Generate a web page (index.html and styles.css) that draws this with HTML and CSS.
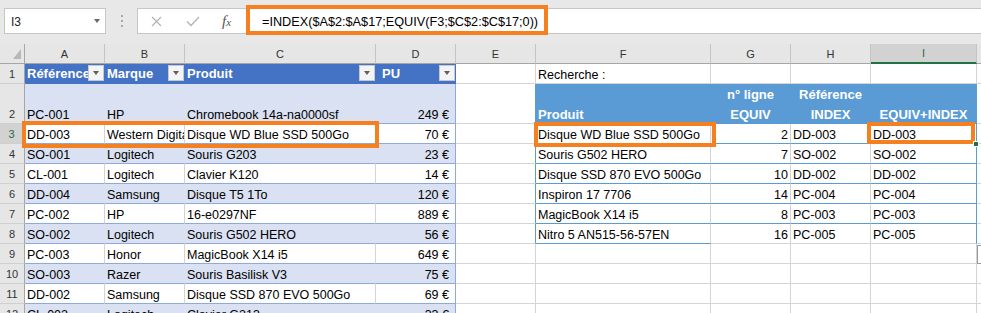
FILE: index.html
```html
<!DOCTYPE html>
<html lang="fr">
<head>
<meta charset="utf-8">
<title>Excel - INDEX EQUIV</title>
<link rel="stylesheet" href="styles.css">
</head>
<body>
<div class="app">
  <div class="toolbar">
    <div class="namebox"><span class="nb-text">I3</span><span class="nb-arrow"></span></div>
    <div class="grip"><i></i><i></i><i></i></div>
    <div class="fbar">
      <div class="fbtns">
        <svg class="ic-x" width="11" height="11" viewBox="0 0 11 11"><path d="M1 1 L10 10 M10 1 L1 10" stroke="#b3b3b3" stroke-width="1.2" fill="none"/></svg>
        <svg class="ic-ok" width="14" height="11" viewBox="0 0 14 11"><path d="M1 5.5 L5 9.5 L13 1" stroke="#b3b3b3" stroke-width="1.3" fill="none"/></svg>
        <span class="fx">f<span>x</span></span>
      </div>
      <div class="ftext">=INDEX($A$2:$A$17;EQUIV(F3;$C$2:$C$17;0))</div>
    </div>
    <div class="mark mark-formula"></div>
  </div>

  <div class="sheet">
    <!-- column headers -->
    <div class="ch corner"><svg width="8" height="10" viewBox="0 0 8 10"><polygon points="8,0 8,10 0,10" fill="#b7b7b7"/></svg></div>
    <div class="ch">A</div>
    <div class="ch">B</div>
    <div class="ch">C</div>
    <div class="ch">D</div>
    <div class="ch">E</div>
    <div class="ch">F</div>
    <div class="ch">G</div>
    <div class="ch">H</div>
    <div class="ch sel">I</div>
    <div class="ch j"></div>

    <!-- row 1 -->
    <div class="rh">1</div>
    <div class="c thd"><span class="t">Référence</span><span class="flt"></span></div>
    <div class="c thd"><span class="t">Marque</span><span class="flt"></span></div>
    <div class="c thd"><span class="t">Produit</span><span class="flt"></span></div>
    <div class="c thd pu"><span class="t">PU</span><span class="flt"></span></div>
    <div class="c"></div>
    <div class="c">Recherche :</div>
    <div class="c"></div>
    <div class="c"></div>
    <div class="c"></div>
    <div class="c j"></div>

    <!-- row 2 -->
    <div class="rh">2</div>
    <div class="c band">PC-001</div>
    <div class="c band">HP</div>
    <div class="c band">Chromebook 14a-na0000sf</div>
    <div class="c band r eur tend">249 €</div>
    <div class="c tl"></div>
    <div class="c rhd">Produit</div>
    <div class="c rhd ctr"><div class="two"><span>n° ligne</span><span>EQUIV</span></div></div>
    <div class="c rhd ctr"><div class="two"><span>Référence</span><span>INDEX</span></div></div>
    <div class="c rhd ctr tr">EQUIV+INDEX</div>
    <div class="c j"></div>

    <!-- row 3 -->
    <div class="rh sel">3</div>
    <div class="c trow">DD-003</div>
    <div class="c trow">Western Digital</div>
    <div class="c trow">Disque WD Blue SSD 500Go</div>
    <div class="c trow r eur tend">70 €</div>
    <div class="c tl"></div>
    <div class="c rb">Disque WD Blue SSD 500Go</div>
    <div class="c rb r">2</div>
    <div class="c rb">DD-003</div>
    <div class="c rb tr">DD-003</div>
    <div class="c j"></div>

    <!-- row 4 -->
    <div class="rh">4</div>
    <div class="c band">SO-001</div>
    <div class="c band">Logitech</div>
    <div class="c band">Souris G203</div>
    <div class="c band r eur tend">23 €</div>
    <div class="c tl"></div>
    <div class="c rb">Souris G502 HERO</div>
    <div class="c rb r">7</div>
    <div class="c rb">SO-002</div>
    <div class="c rb tr">SO-002</div>
    <div class="c j"></div>

    <!-- row 5 -->
    <div class="rh">5</div>
    <div class="c trow">CL-001</div>
    <div class="c trow">Logitech</div>
    <div class="c trow">Clavier K120</div>
    <div class="c trow r eur tend">14 €</div>
    <div class="c tl"></div>
    <div class="c rb">Disque SSD 870 EVO 500Go</div>
    <div class="c rb r">10</div>
    <div class="c rb">DD-002</div>
    <div class="c rb tr">DD-002</div>
    <div class="c j"></div>

    <!-- row 6 -->
    <div class="rh">6</div>
    <div class="c band">DD-004</div>
    <div class="c band">Samsung</div>
    <div class="c band">Disque T5 1To</div>
    <div class="c band r eur tend">120 €</div>
    <div class="c tl"></div>
    <div class="c rb">Inspiron 17 7706</div>
    <div class="c rb r">14</div>
    <div class="c rb">PC-004</div>
    <div class="c rb tr">PC-004</div>
    <div class="c j"></div>

    <!-- row 7 -->
    <div class="rh">7</div>
    <div class="c trow">PC-002</div>
    <div class="c trow">HP</div>
    <div class="c trow">16-e0297NF</div>
    <div class="c trow r eur tend">889 €</div>
    <div class="c tl"></div>
    <div class="c rb">MagicBook X14 i5</div>
    <div class="c rb r">8</div>
    <div class="c rb">PC-003</div>
    <div class="c rb tr">PC-003</div>
    <div class="c j"></div>

    <!-- row 8 -->
    <div class="rh">8</div>
    <div class="c band">SO-002</div>
    <div class="c band">Logitech</div>
    <div class="c band">Souris G502 HERO</div>
    <div class="c band r eur tend">56 €</div>
    <div class="c tl"></div>
    <div class="c rb">Nitro 5 AN515-56-57EN</div>
    <div class="c r">16</div>
    <div class="c">PC-005</div>
    <div class="c tr">PC-005</div>
    <div class="c j"></div>

    <!-- row 9 -->
    <div class="rh">9</div>
    <div class="c trow">PC-003</div>
    <div class="c trow">Honor</div>
    <div class="c trow">MagicBook X14 i5</div>
    <div class="c trow r eur tend">649 €</div>
    <div class="c"></div>
    <div class="c"></div>
    <div class="c"></div>
    <div class="c"></div>
    <div class="c"></div>
    <div class="c j"></div>

    <!-- row 10 -->
    <div class="rh">10</div>
    <div class="c band">SO-003</div>
    <div class="c band">Razer</div>
    <div class="c band">Souris Basilisk V3</div>
    <div class="c band r eur tend">75 €</div>
    <div class="c"></div>
    <div class="c"></div>
    <div class="c"></div>
    <div class="c"></div>
    <div class="c"></div>
    <div class="c j"></div>

    <!-- row 11 -->
    <div class="rh">11</div>
    <div class="c trow">DD-002</div>
    <div class="c trow">Samsung</div>
    <div class="c trow">Disque SSD 870 EVO 500Go</div>
    <div class="c trow r eur tend">69 €</div>
    <div class="c"></div>
    <div class="c"></div>
    <div class="c"></div>
    <div class="c"></div>
    <div class="c"></div>
    <div class="c j"></div>

    <!-- row 12 -->
    <div class="rh">12</div>
    <div class="c band">CL-002</div>
    <div class="c band">Logitech</div>
    <div class="c band">Clavier G213</div>
    <div class="c band r eur tend">33 €</div>
    <div class="c"></div>
    <div class="c"></div>
    <div class="c"></div>
    <div class="c"></div>
    <div class="c"></div>
    <div class="c j"></div>

    <!-- overlays -->
    <div class="mark mark-row"></div>
    <div class="mark mark-f3"></div>
    <div class="mark mark-i3"></div>
    <div class="handle"></div>
    <div class="qa"></div>
  </div>
</div>
</body>
</html>
```
FILE: styles.css
```css
* { box-sizing: border-box; }
html, body { margin: 0; padding: 0; }
body {
  width: 981px;
  height: 313px;
  overflow: hidden;
  background: #ffffff;
  font-family: "Liberation Sans", Arial, sans-serif;
  color: #000;
}
.app { width: 981px; }

/* ---------- formula bar ---------- */
.toolbar {
  position: relative;
  height: 44px;
  background: #e8e8e8;
  display: flex;
  align-items: flex-start;
}
.namebox {
  margin: 8px 0 0 4px;
  width: 102px;
  height: 26px;
  background: #fff;
  border: 1px solid #c6c6c6;
  display: flex;
  align-items: center;
  padding-left: 6px;
  font-size: 12px;
  color: #222;
}
.nb-text { flex: 1; padding-top: 1px; }
.nb-arrow {
  width: 0; height: 0;
  border-left: 3.5px solid transparent;
  border-right: 3.5px solid transparent;
  border-top: 4px solid #6a6a6a;
  margin-right: 5px;
}
.grip {
  width: 31px;
  height: 26px;
  margin-top: 8px;
  display: flex;
  flex-direction: column;
  align-items: center;
  justify-content: center;
  gap: 3px;
}
.grip i { display: block; width: 2px; height: 2px; background: #a8a8a8; }
.fbar {
  flex: 1;
  margin-top: 8px;
  height: 26px;
  background: #fff;
  border: 1px solid #c6c6c6;
  border-right: none;
  display: flex;
  align-items: center;
}
.fbtns {
  width: 109px;
  height: 100%;
  display: flex;
  align-items: center;
}
.ic-x { margin-left: 13px; }
.ic-ok { margin-left: 24px; }
.fx {
  margin-left: 22px;
  font-family: "Liberation Serif", "Times New Roman", serif;
  font-style: italic;
  font-size: 15px;
  color: #555;
  line-height: 1;
}
.fx span { font-size: 11px; }
.ftext {
  padding-left: 15px;
  padding-top: 2px;
  font-size: 12.7px;
  color: #000;
  white-space: nowrap;
}

/* ---------- annotations ---------- */
.mark {
  position: absolute;
  border: 4px solid #f5801f;
  pointer-events: none;
}
.mark-formula { left: 246px; top: 5px; width: 302px; height: 30px; }
.mark-row { left: 22px; top: 77px; width: 357px; height: 27px; }
.mark-f3 { left: 534px; top: 78px; width: 182px; height: 25px; }
.mark-i3 { left: 867px; top: 78px; width: 108px; height: 22px; }
.handle {
  position: absolute;
  left: 973px; top: 97px;
  width: 6px; height: 6px;
  background: #217346;
  border: 1px solid #fff;
}
.qa {
  position: absolute;
  left: 977px; top: 201px;
  width: 12px; height: 19px;
  background: #fff;
  border: 1px solid #9a9a9a;
}

/* ---------- grid ---------- */
.sheet {
  position: relative;
  display: grid;
  grid-template-columns: 25px 80px 80px 191px 80px 80px 175px 80px 80px 106px 4px;
  grid-template-rows: 20px 20px 40px repeat(10, 20px);
  overflow: hidden;
}
.ch {
  background: #e6e6e6;
  border-right: 1px solid #c4c4c4;
  border-bottom: 1px solid #a6a6a6;
  display: flex;
  align-items: center;
  justify-content: center;
  font-size: 11px;
  color: #333;
}
.ch.corner { justify-content: flex-end; align-items: flex-end; padding: 0 3px 4px 0; border-right-color: #a6a6a6; }
.ch.sel { background: #d2d2d2; color: #1d6b40; border-bottom: 2px solid #217346; }
.ch.j { border-right: none; }
.rh {
  background: #e6e6e6;
  border-right: 1px solid #a6a6a6;
  border-bottom: 1px solid #cfcfcf;
  display: flex;
  align-items: flex-end;
  justify-content: center;
  font-size: 11px;
  line-height: 16px;
  padding-bottom: 1px;
  color: #333;
}
.rh.sel { background: #d2d2d2; color: #1d6b40; border-right: 2px solid #217346; }

.c {
  border-right: 1px solid #d4d4d4;
  border-bottom: 1px solid #d4d4d4;
  padding: 0 2px;
  display: flex;
  align-items: flex-end;
  font-size: 12.5px;
  line-height: 16px;
  white-space: nowrap;
  overflow: hidden;
}
.c.j { border-right: none; }
.r { justify-content: flex-end; }
.eur { padding-right: 6px; }
.ctr { justify-content: center; }

/* left table */
.thd {
  background: #4472c4;
  color: #fff;
  font-weight: bold;
  font-size: 13px;
  border-right-color: #4472c4;
  border-bottom-color: #4472c4;
  padding-right: 0;
  padding-bottom: 1px;
}
.thd .t { flex: 1; overflow: hidden; }
.thd.pu { padding-left: 6px; }
.flt {
  align-self: flex-start;
  margin-top: 1px;
  width: 16px;
  height: 16px;
  flex: none;
  background: #f4f4f4;
  border: 1px solid #c9c9c9;
  display: flex;
  align-items: center;
  justify-content: center;
}
.flt::after {
  content: "";
  width: 0; height: 0;
  border-left: 3.5px solid transparent;
  border-right: 3.5px solid transparent;
  border-top: 4px solid #5f5f5f;
}
.band {
  background: #d9e1f2;
  border-bottom-color: #8ea9db;
  border-right-color: #d9e1f2;
}
.trow { border-bottom-color: #8ea9db; }
.tend { border-right-color: #8ea9db; }

/* right table */
.rhd {
  background: #5b9bd5;
  color: #fff;
  font-weight: bold;
  font-size: 13px;
  border-right-color: #5b9bd5;
  border-bottom-color: #5b9bd5;
}
.two {
  display: flex;
  flex-direction: column;
  align-items: center;
  gap: 4px;
}
.rb { border-bottom-color: #5b9bd5; }
.tl { border-right-color: #5b9bd5; }
.tr { border-right-color: #5b9bd5; }
```
